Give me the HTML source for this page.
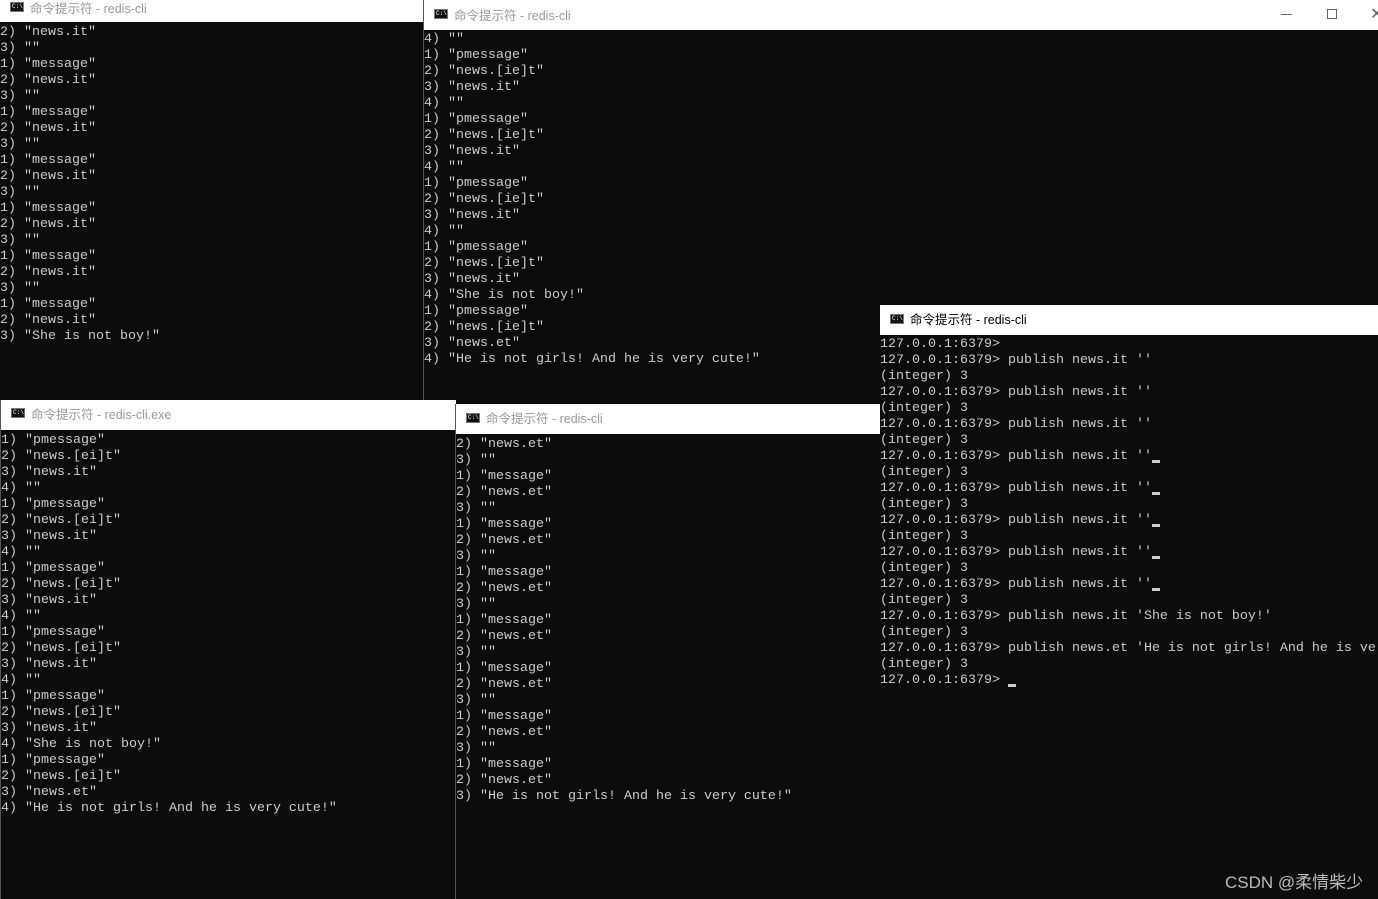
<!DOCTYPE html>
<html><head><meta charset="utf-8">
<style>
*{margin:0;padding:0;box-sizing:border-box}
body{width:1378px;height:899px;background:#0c0c0c;position:relative;overflow:hidden;font-family:"Liberation Mono","Noto Sans CJK SC",monospace}
.win{position:absolute;background:#0c0c0c;overflow:hidden}
.tb{position:absolute;left:0;right:0;top:0;background:#fff;font-family:"Liberation Sans","Noto Sans CJK SC",sans-serif;font-size:12.5px;color:#999;white-space:nowrap}
.tb .ic{position:absolute;left:10px;width:14px;height:10px;background:#111;border:1px solid #777;color:#fff;font-size:6px;line-height:8px;font-family:"Liberation Mono",monospace;padding-left:1px}
.tb .t{position:absolute;left:30px}
.txt{position:absolute;left:0;font-size:13.33px;line-height:16px;color:#cccccc;white-space:pre}
.cur{position:absolute;background:#ccc;width:8px;height:3px}
</style></head><body>

<div class="win" style="left:423px;top:0;width:955px;height:511px;border-left:1px solid #555;border-bottom:1px solid #555">
 <div class="tb" style="height:30px">
  <div class="ic" style="top:9px">C:\</div><div class="t" style="top:5px">命令提示符 - redis-cli</div>
  <div style="position:absolute;left:857px;top:14px;width:11px;height:1px;background:#666"></div>
  <div style="position:absolute;left:903px;top:9px;width:10px;height:10px;border:1px solid #666"></div>
  <div style="position:absolute;left:946px;top:4px;color:#666;font-size:16px">✕</div>
 </div>
 <div class="txt" style="top:32px">4) ""
1) "pmessage"
2) "news.[ie]t"
3) "news.it"
4) ""
1) "pmessage"
2) "news.[ie]t"
3) "news.it"
4) ""
1) "pmessage"
2) "news.[ie]t"
3) "news.it"
4) ""
1) "pmessage"
2) "news.[ie]t"
3) "news.it"
4) "She is not boy!"
1) "pmessage"
2) "news.[ie]t"
3) "news.et"
4) "He is not girls! And he is very cute!"</div>
</div>

<div class="win" style="left:0;top:0;width:423px;height:400px">
 <div class="tb" style="height:22px">
  <div class="ic" style="top:2px">C:\</div><div class="t" style="top:-2px">命令提示符 - redis-cli</div>
 </div>
 <div class="txt" style="top:25px">2) "news.it"
3) ""
1) "message"
2) "news.it"
3) ""
1) "message"
2) "news.it"
3) ""
1) "message"
2) "news.it"
3) ""
1) "message"
2) "news.it"
3) ""
1) "message"
2) "news.it"
3) ""
1) "message"
2) "news.it"
3) "She is not boy!"</div>
</div>

<div class="win" style="left:0;top:400px;width:456px;height:499px;border-left:1px solid #555">
 <div class="tb" style="height:30px">
  <div class="ic" style="top:8px">C:\</div><div class="t" style="top:4px">命令提示符 - redis-cli.exe</div>
 </div>
 <div class="txt" style="top:33px">1) "pmessage"
2) "news.[ei]t"
3) "news.it"
4) ""
1) "pmessage"
2) "news.[ei]t"
3) "news.it"
4) ""
1) "pmessage"
2) "news.[ei]t"
3) "news.it"
4) ""
1) "pmessage"
2) "news.[ei]t"
3) "news.it"
4) ""
1) "pmessage"
2) "news.[ei]t"
3) "news.it"
4) "She is not boy!"
1) "pmessage"
2) "news.[ei]t"
3) "news.et"
4) "He is not girls! And he is very cute!"</div>
</div>

<div class="win" style="left:455px;top:404px;width:425px;height:495px;border-left:1px solid #555">
 <div class="tb" style="height:30px">
  <div class="ic" style="top:9px">C:\</div><div class="t" style="top:4px">命令提示符 - redis-cli</div>
 </div>
 <div class="txt" style="top:33px">2) "news.et"
3) ""
1) "message"
2) "news.et"
3) ""
1) "message"
2) "news.et"
3) ""
1) "message"
2) "news.et"
3) ""
1) "message"
2) "news.et"
3) ""
1) "message"
2) "news.et"
3) ""
1) "message"
2) "news.et"
3) ""
1) "message"
2) "news.et"
3) "He is not girls! And he is very cute!"</div>
</div>

<div class="win" style="left:880px;top:305px;width:498px;height:510px">
 <div class="tb" style="height:30px;color:#000">
  <div class="ic" style="top:9px">C:\</div><div class="t" style="top:4px">命令提示符 - redis-cli</div>
 </div>
 <div class="txt" style="top:32px">127.0.0.1:6379>
127.0.0.1:6379> publish news.it ''
(integer) 3
127.0.0.1:6379> publish news.it ''
(integer) 3
127.0.0.1:6379> publish news.it ''
(integer) 3
127.0.0.1:6379> publish news.it ''
(integer) 3
127.0.0.1:6379> publish news.it ''
(integer) 3
127.0.0.1:6379> publish news.it ''
(integer) 3
127.0.0.1:6379> publish news.it ''
(integer) 3
127.0.0.1:6379> publish news.it ''
(integer) 3
127.0.0.1:6379> publish news.it 'She is not boy!'
(integer) 3
127.0.0.1:6379> publish news.et 'He is not girls! And he is ve
(integer) 3
127.0.0.1:6379> </div>
 <div class="cur" style="left:272px;top:155px"></div>
 <div class="cur" style="left:272px;top:187px"></div>
 <div class="cur" style="left:272px;top:219px"></div>
 <div class="cur" style="left:272px;top:251px"></div>
 <div class="cur" style="left:272px;top:283px"></div>
 <div class="cur" style="left:128px;top:379px"></div>
</div>

<div style="position:absolute;left:1225px;top:868px;color:#bbb;font-family:'Liberation Sans','Noto Sans CJK SC',sans-serif;font-size:17px">CSDN @柔情柴少</div>
</body></html>
